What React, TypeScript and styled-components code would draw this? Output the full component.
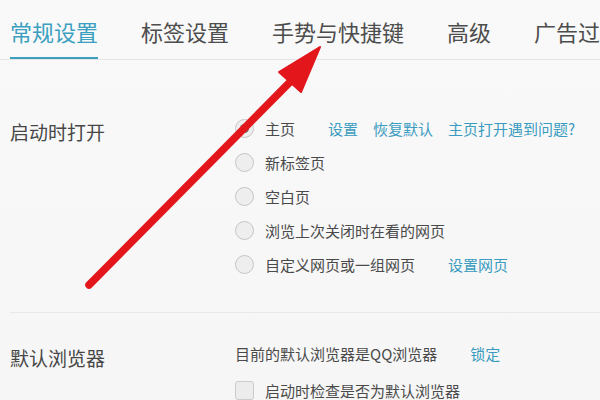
import React from "react";
import styled, { createGlobalStyle } from "styled-components";

const GlobalStyle = createGlobalStyle`
  html, body {
    margin: 0;
    padding: 0;
    background: #f8f8f8;
  }
  body {
    font-family: "Noto Sans CJK SC", "Noto Sans", sans-serif;
    color: #4a4a4a;
  }
`;

const Page = styled.div`
  position: relative;
  width: 600px;
  height: 400px;
  overflow: hidden;
  background: linear-gradient(180deg, #f9f9f9 0%, #f6f6f6 100%);
`;

const TabBar = styled.div`
  display: flex;
  gap: 43px;
  padding-left: 10px;
  height: 59px;
  border-bottom: 1px solid #e4e4e4;
  white-space: nowrap;
  overflow: hidden;
`;

const Tab = styled.div<{ active?: boolean }>`
  box-sizing: border-box;
  height: 59px;
  padding-top: 16px;
  font-size: 22px;
  line-height: 30px;
  flex-shrink: 0;
  color: ${({ active }) => (active ? "#3b9fc0" : "#4d4d4d")};
  border-bottom: 2px solid ${({ active }) => (active ? "#3b9fc0" : "transparent")};
`;

const Section = styled.div<{ top: number }>`
  display: grid;
  grid-template-columns: 225px 1fr;
  padding-left: 10px;
  padding-top: ${({ top }) => top}px;
`;

const SectionLabel = styled.div<{ offset: number }>`
  font-size: 19px;
  line-height: 30px;
  padding-top: ${({ offset }) => offset}px;
  color: #474747;
`;

const Options = styled.div`
  display: flex;
  flex-direction: column;
`;

const Row = styled.div<{ h?: number }>`
  display: flex;
  align-items: center;
  height: ${({ h }) => h ?? 34}px;
  font-size: 15px;
  white-space: nowrap;
`;

const Radio = styled.span<{ checked?: boolean }>`
  position: relative;
  box-sizing: border-box;
  width: 19px;
  height: 19px;
  border-radius: 50%;
  border: 1px solid #c6c6c6;
  background: #eeeeee;
  margin-right: 11px;
  flex-shrink: 0;

  &::after {
    content: "";
    display: ${({ checked }) => (checked ? "block" : "none")};
    position: absolute;
    left: 4px;
    top: 4px;
    width: 9px;
    height: 9px;
    border-radius: 50%;
    background: #6a6a6a;
  }
`;

const Checkbox = styled.span`
  box-sizing: border-box;
  width: 19px;
  height: 19px;
  border-radius: 3px;
  border: 1px solid #cbcbcb;
  background: #ececec;
  margin-right: 11px;
  flex-shrink: 0;
`;

const Links = styled.span`
  display: flex;
  gap: 15px;
  margin-left: 33px;
`;

const Link = styled.span`
  color: #3a9cc0;
`;

const Divider = styled.div`
  height: 1px;
  margin: 31px 0 0 10px;
  background: #e8e8e8;
`;

const ArrowLayer = styled.svg`
  position: absolute;
  left: 0;
  top: 0;
  pointer-events: none;
`;

const startOptions = [
  { label: "主页", checked: true, links: ["设置", "恢复默认", "主页打开遇到问题?"] },
  { label: "新标签页" },
  { label: "空白页" },
  { label: "浏览上次关闭时在看的网页" },
  { label: "自定义网页或一组网页", links: ["设置网页"] },
];

const tabs = ["常规设置", "标签设置", "手势与快捷键", "高级", "广告过滤"];

export default function App(): React.JSX.Element {
  return (
    <>
      <GlobalStyle />
      <Page>
        <TabBar>
          {tabs.map((t, i) => (
            <Tab key={t} active={i === 0}>
              {t}
            </Tab>
          ))}
        </TabBar>

        <Section top={51}>
          <SectionLabel offset={6}>启动时打开</SectionLabel>
          <Options>
            {startOptions.map((o) => (
              <Row key={o.label}>
                <Radio checked={o.checked} />
                {o.label}
                {o.links && (
                  <Links>
                    {o.links.map((l) => (
                      <Link key={l}>{l}</Link>
                    ))}
                  </Links>
                )}
              </Row>
            ))}
          </Options>
        </Section>

        <Divider />

        <Section top={22}>
          <SectionLabel offset={8}>默认浏览器</SectionLabel>
          <Options>
            <Row h={37}>
              目前的默认浏览器是QQ浏览器
              <Links>
                <Link>锁定</Link>
              </Links>
            </Row>
            <Row h={37}>
              <Checkbox />
              启动时检查是否为默认浏览器
            </Row>
          </Options>
        </Section>

        <ArrowLayer width="600" height="400" viewBox="0 0 600 400">
          <defs>
            <filter id="soft" x="-5%" y="-5%" width="110%" height="110%">
              <feGaussianBlur stdDeviation="0.6" />
            </filter>
          </defs>
          <g filter="url(#soft)" fill="#e3161b" stroke="#e3161b">
            <line x1="89" y1="285" x2="292" y2="80" strokeWidth="7.5" strokeLinecap="round" />
            <polygon points="320,47 279,72 301,92" strokeWidth="2" strokeLinejoin="round" />
          </g>
        </ArrowLayer>
      </Page>
    </>
  );
}
